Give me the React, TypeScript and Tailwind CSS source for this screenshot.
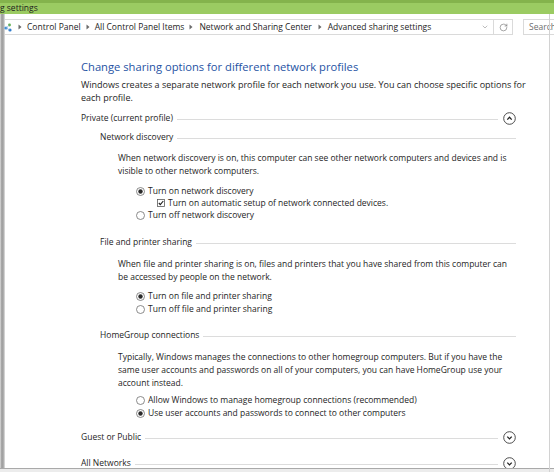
import { ChevronDown, RotateCw } from "lucide-react";

const font = { fontFamily: '"Open Sans", "Noto Sans", sans-serif' };

function Arrow() {
  return (
    <svg width="4" height="6" viewBox="0 0 4 6" className="mx-[4px] shrink-0">
      <path d="M0.5 0.5 L3.5 3 L0.5 5.5 Z" fill="#6b6b6b" />
    </svg>
  );
}

function CircleChevron({ up }: { up?: boolean }) {
  return (
    <svg width="13" height="13" viewBox="0 0 13 13" className="shrink-0">
      <circle cx="6.5" cy="6.5" r="5.8" fill="white" stroke="#3a3a3a" strokeWidth="0.9" />
      <path
        d={up ? "M4.3 7.6 L6.5 5.3 L8.7 7.6" : "M4.3 5.6 L6.5 7.9 L8.7 5.6"}
        fill="none"
        stroke="#222"
        strokeWidth="1.3"
      />
    </svg>
  );
}

function Radio({ on }: { on?: boolean }) {
  return (
    <svg width="9" height="9" viewBox="0 0 9 9" className="shrink-0">
      <circle cx="4.5" cy="4.5" r="4" fill="white" stroke="#6e6e6e" strokeWidth="0.8" />
      {on && <circle cx="4.5" cy="4.5" r="2.2" fill="#2a2a2a" />}
    </svg>
  );
}

function Check() {
  return (
    <svg width="8" height="8" viewBox="0 0 8 8" className="shrink-0">
      <rect x="0.5" y="0.5" width="7" height="7" fill="white" stroke="#5a5a5a" strokeWidth="0.8" />
      <path d="M1.8 4 L3.3 5.6 L6.3 2" fill="none" stroke="#1e1e1e" strokeWidth="1.1" />
    </svg>
  );
}

function Section({ label, top, icon, className }: { label: string; top?: boolean; icon?: "up" | "down"; className?: string }) {
  return (
    <div className={`flex items-center h-[12px] leading-[12px] ${className ?? ""}`}>
      <span className="text-[#1e1e1e] whitespace-nowrap">{label}</span>
      <div className={`flex-1 h-px bg-[#dcdcdc] ml-[4px] mt-[2px] ${top ? "mr-[5px]" : ""}`} />
      {icon && <CircleChevron up={icon === "up"} />}
    </div>
  );
}

function Option({ children, on }: { children: string; on?: boolean }) {
  return (
    <div className="flex items-center gap-[3px] h-[12px] leading-[12px] pl-[36px]">
      <Radio on={on} />
      <span>{children}</span>
    </div>
  );
}

export default function App() {
  return (
    <div className="relative w-[554px] h-[472px] overflow-hidden bg-white flex flex-col text-[#1e1e1e]" style={font}>
      {/* title bar */}
      <div className="h-[14px] shrink-0 bg-[#9bcb62] border-t-[3px] border-[#84b34c] text-[8.5px] leading-[10px] text-[#1c1c1c]">
        g settings
      </div>

      <div className="flex-1 flex min-h-0 border-b border-[#a9a9a9]">
        <div className="w-[5px] shrink-0 bg-[linear-gradient(to_right,#dedede,#9d9d9d_35%,#a6a6a6_65%,#e4e4e4)]" />

        <div className="flex-1 flex flex-col min-w-0">
          {/* address bar */}
          <div className="h-[26px] shrink-0 flex items-center text-[8.5px]">
            <div className="w-[508px] shrink-0 h-[16px] border border-l-0 border-[#dadada] flex items-center">
              <svg width="9" height="10" viewBox="0 0 9 10" className="mr-[1px] -ml-[1px]">
                <circle cx="2" cy="6" r="1.6" fill="#3f8fd8" />
                <circle cx="5.5" cy="3" r="1.4" fill="#5fae4d" />
                <circle cx="6" cy="8" r="1.6" fill="#2f7ccc" />
                <path d="M2 6 L5.5 3 M2 6 L6 8" stroke="#7aa7d6" strokeWidth="0.6" />
              </svg>
              <Arrow />
              <span className="mx-[1px]">Control Panel</span>
              <Arrow />
              <span className="mx-[1px]">All Control Panel Items</span>
              <Arrow />
              <span className="mx-[2px]">Network and Sharing Center</span>
              <Arrow />
              <span className="mx-[2px]">Advanced sharing settings</span>
              <div className="flex-1" />
              <ChevronDown size={8} strokeWidth={1.5} color="#7a7a7a" className="mr-[4px]" />
              <div className="w-px h-full bg-[#dadada]" />
              <div className="w-[18px] flex justify-center">
                <RotateCw size={9} strokeWidth={1.6} color="#6d6d6d" />
              </div>
            </div>
            <div className="ml-[10px] h-[16px] w-[60px] shrink-0 border border-[#dadada] flex items-center pl-[5px] text-[#6d6d6d] whitespace-nowrap">
              Search
            </div>
          </div>

          {/* content */}
          <div className="flex-1 min-h-0 overflow-hidden pl-[76px] pr-[38px] text-[8.5px]">
            <div className="mt-[20px] text-[11.2px] leading-[14px] text-[#2552a3] whitespace-nowrap">
              Change sharing options for different network profiles
            </div>
            <p className="mt-[4px] text-[9px] leading-[13px] -mr-[14px]">
              Windows creates a separate network profile for each network you use. You can choose specific options for each profile.
            </p>

            <Section label="Private (current profile)" top icon="up" className="mt-[8px]" />

            <div className="pl-[19px]">
              <Section label="Network discovery" className="mt-[7px]" />
              <p className="mt-[8px] leading-[13px] pl-[18px]">
                When network discovery is on, this computer can see other network computers and devices and is visible to other network computers.
              </p>
              <div className="mt-[8px]">
                <Option on>Turn on network discovery</Option>
                <div className="flex items-center gap-[3px] h-[12px] leading-[12px] pl-[57px]">
                  <Check />
                  <span>Turn on automatic setup of network connected devices.</span>
                </div>
                <Option>Turn off network discovery</Option>
              </div>

              <Section label="File and printer sharing" className="mt-[15px]" />
              <p className="mt-[9px] leading-[13px] pl-[18px]">
                When file and printer sharing is on, files and printers that you have shared from this computer can be accessed by people on the network.
              </p>
              <div className="mt-[7px] flex flex-col gap-[1px]">
                <Option on>Turn on file and printer sharing</Option>
                <Option>Turn off file and printer sharing</Option>
              </div>

              <Section label="HomeGroup connections" className="mt-[14px]" />
              <p className="mt-[9px] leading-[13px] pl-[18px]">
                Typically, Windows manages the connections to other homegroup computers. But if you have the same user accounts and passwords on all of your computers, you can have HomeGroup use your account instead.
              </p>
              <div className="mt-[5px] flex flex-col gap-[1px]">
                <Option>Allow Windows to manage homegroup connections (recommended)</Option>
                <Option on>Use user accounts and passwords to connect to other computers</Option>
              </div>
            </div>

            <Section label="Guest or Public" top icon="down" className="mt-[12px]" />
            <Section label="All Networks" top icon="down" className="mt-[14px]" />
          </div>
        </div>
      </div>
      <div className="h-[3px] shrink-0 bg-[#ececec]" />

      <div className="absolute left-[549px] top-[14px] bottom-0 w-px bg-[#d2d2d2]" />
    </div>
  );
}
